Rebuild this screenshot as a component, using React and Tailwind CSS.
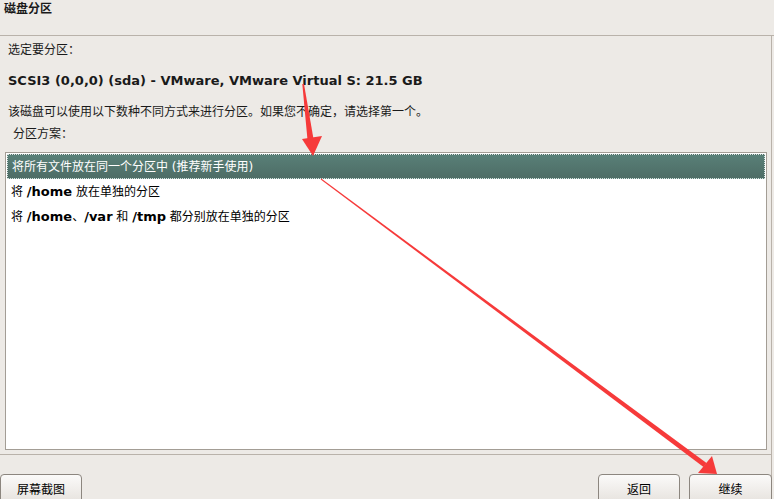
import React from 'react';

const rows = [
  [{ t: '将所有文件放在同一个分区中 (推荐新手使用)' }],
  [{ t: '将 ' }, { t: '/home', b: true }, { t: ' 放在单独的分区' }],
  [{ t: '将 ' }, { t: '/home', b: true }, { t: '、' }, { t: '/var', b: true }, { t: ' 和 ' }, { t: '/tmp', b: true }, { t: ' 都分别放在单独的分区' }],
];

const Arrows = () => (
  <svg className="absolute left-0 top-0 pointer-events-none" width="774" height="499" viewBox="0 0 774 499">
    <polygon points="302.3,84 304,84 313.5,139 307.5,140" fill="#f63a3a" />
    <polygon points="302,139 322,136 313,156" fill="#f63a3a" />
    <polygon points="320.7,179.4 321.3,178.6 706.5,463 703.5,467" fill="#f63a3a" />
    <polygon points="698,473 712,456 717,474" fill="#f63a3a" />
  </svg>
);

const Button = ({ label, className }) => (
  <button className={`h-[32px] shrink-0 rounded-t-[4px] border border-[#8c867f] bg-gradient-to-b from-[#fbfaf9] to-[#e4e0db] text-[12px] text-black ${className}`}>
    {label}
  </button>
);

export default function App() {
  return (
    <div
      className="relative w-[774px] h-[499px] overflow-hidden bg-[#edeae6] text-[12px] text-[#1a1a1a]"
      style={{ fontFamily: '"DejaVu Sans", "Noto Sans CJK SC", sans-serif' }}
    >
      <div className="h-[36px] border-b border-[#b9b2aa] pl-[4px] pt-[1px] font-bold leading-[16px]">磁盘分区</div>
      <div className="flex h-[463px] overflow-hidden">
        <div className="w-[772px] border-r border-[#b9b2aa] flex flex-col">
          <div className="shrink-0 pl-[8px] pt-[6px] leading-[16px]">选定要分区：</div>
          <div className="shrink-0 pl-[8px] pt-[14px] text-[13px] font-bold leading-[18px]">
            SCSI3 (0,0,0) (sda) - VMware, VMware Virtual S: 21.5 GB
          </div>
          <div className="shrink-0 pl-[8px] pt-[14px] leading-[16px]">该磁盘可以使用以下数种不同方式来进行分区。如果您不确定，请选择第一个。</div>
          <div className="shrink-0 pl-[13px] pt-[6px] leading-[16px]">分区方案：</div>
          <div className="shrink-0 ml-[5px] mt-[10px] w-[762px] h-[298px] border border-[#a39d95] bg-white">
            {rows.map((r, i) => (
              <div
                key={i}
                className={
                  i === 0
                    ? 'h-[25px] mt-px mx-px flex items-center pl-[4px] text-white bg-gradient-to-b from-[#587f77] to-[#4e6d66] border border-dotted border-[#d8e2df]'
                    : 'h-[25px] flex items-center pl-[5px] text-black'
                }
              >
                <span className="whitespace-pre">
                  {r.map((s, j) => (
                    <span key={j} className={s.b ? 'font-bold text-[13px]' : ''}>{s.t}</span>
                  ))}
                </span>
              </div>
            ))}
          </div>
          <div className="shrink-0 mt-[4px] border-b border-[#b9b2aa]"></div>
          <div className="shrink-0 flex mt-[19px]">
            <Button label="屏幕截图" className="w-[82px]" />
            <div className="flex-1"></div>
            <Button label="返回" className="w-[82px] mr-[9px]" />
            <Button label="继续" className="w-[83px] -mr-[1px]" />
          </div>
        </div>
      </div>
      <Arrows />
    </div>
  );
}
